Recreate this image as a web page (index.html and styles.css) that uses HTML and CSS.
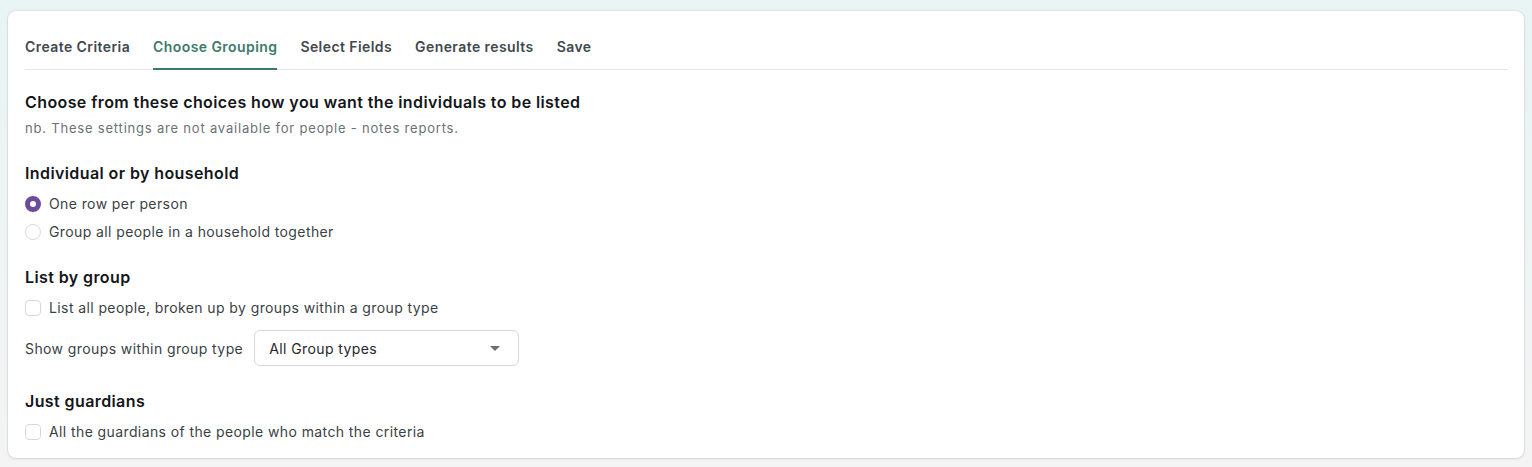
FILE: index.html
```html
<!DOCTYPE html>
<html lang="en">
<head>
    <meta charset="UTF-8">
    <title>Report - Choose Grouping</title>
    <link rel="stylesheet" href="styles.css">
</head>
<body>

<div class="card">
    <nav class="tabs">
        <a class="tab">Create Criteria</a>
        <a class="tab active">Choose Grouping</a>
        <a class="tab">Select Fields</a>
        <a class="tab">Generate results</a>
        <a class="tab">Save</a>
    </nav>

    <h2 class="title">Choose from these choices how you want the individuals to be listed</h2>
    <p class="note">nb. These settings are not available for people - notes reports.</p>

    <section class="block">
        <h3>Individual or by household</h3>
        <label class="option"><span class="radio checked"></span>One row per person</label>
        <label class="option"><span class="radio"></span>Group all people in a household together</label>
    </section>

    <section class="block group-block">
        <h3>List by group</h3>
        <label class="option"><span class="check"></span>List all people, broken up by groups within a group type</label>
        <div class="select-row">
            <span>Show groups within group type</span>
            <div class="select">
                <span>All Group types</span>
                <span class="caret"></span>
            </div>
        </div>
    </section>

    <section class="block guardian-block">
        <h3>Just guardians</h3>
        <label class="option"><span class="check"></span>All the guardians of the people who match the criteria</label>
    </section>
</div>

</body>
</html>
```

FILE: styles.css
```css
body {
    margin: 0;
    padding: 11px 8px 8px;
    font-family: 'Inter', 'Noto Sans', sans-serif;
    background: linear-gradient(#e8f4f4, #f4f4f4);
    color: #212529;
    min-height: 448px;
}
.card {
    background-color: #fff;
    border-radius: 8px;
    box-shadow: 0 0 2px rgba(0, 0, 0, 0.18), 0 1px 3px rgba(0, 0, 0, 0.08);
    padding: 0 16px 12px 17px;
}
.tabs {
    display: flex;
    gap: 23px;
    border-bottom: 1px solid #e5e7e9;
    padding-top: 25px;
}
.tab {
    font-size: 14px;
    font-weight: 600;
    letter-spacing: 0.42px;
    color: #41484e;
    line-height: 22px;
    padding-bottom: 10px;
    border-bottom: 2px solid transparent;
    margin-bottom: -1px;
}
.tab.active {
    color: #3d7a6b;
    border-bottom-color: #3d7a6b;
}
.title {
    font-size: 16px;
    font-weight: 600;
    letter-spacing: 0.4px;
    color: #14161a;
    margin: 20px 0 0;
    line-height: 24px;
}
.note {
    font-size: 13px;
    letter-spacing: 0.8px;
    color: #6c7178;
    margin: 4px 0 0;
    line-height: 20px;
}
.block {
    margin-top: 23px;
}
.group-block {
    margin-top: 19px;
}
.guardian-block {
    margin-top: 23px;
}
.block h3 {
    font-size: 16px;
    font-weight: 600;
    letter-spacing: 0.4px;
    color: #14161a;
    margin: 0 0 5px;
    line-height: 24px;
}
.option {
    display: flex;
    align-items: center;
    gap: 8px;
    font-size: 14px;
    letter-spacing: 0.4px;
    color: #3a3f45;
    line-height: 28px;
}
.radio {
    width: 14px;
    height: 14px;
    border: 1px solid #d6d8db;
    border-radius: 50%;
    box-sizing: content-box;
}
.radio.checked {
    width: 6px;
    height: 6px;
    border: 5px solid #6c4a9c;
    background-color: #fff;
}
.check {
    width: 14px;
    height: 14px;
    border: 1px solid #d6d8db;
    border-radius: 4px;
}
.select-row {
    display: flex;
    align-items: center;
    gap: 11px;
    font-size: 14px;
    letter-spacing: 0.4px;
    color: #3a3f45;
    margin-top: 8px;
}
.select {
    display: flex;
    align-items: center;
    justify-content: space-between;
    box-sizing: border-box;
    width: 265px;
    height: 36px;
    padding: 0 18px 0 14px;
    border: 1px solid #d6d8db;
    border-radius: 6px;
    color: #23272b;
}
.caret {
    width: 0;
    height: 0;
    border-left: 5px solid transparent;
    border-right: 5px solid transparent;
    border-top: 5px solid #6b6f73;
}
```
